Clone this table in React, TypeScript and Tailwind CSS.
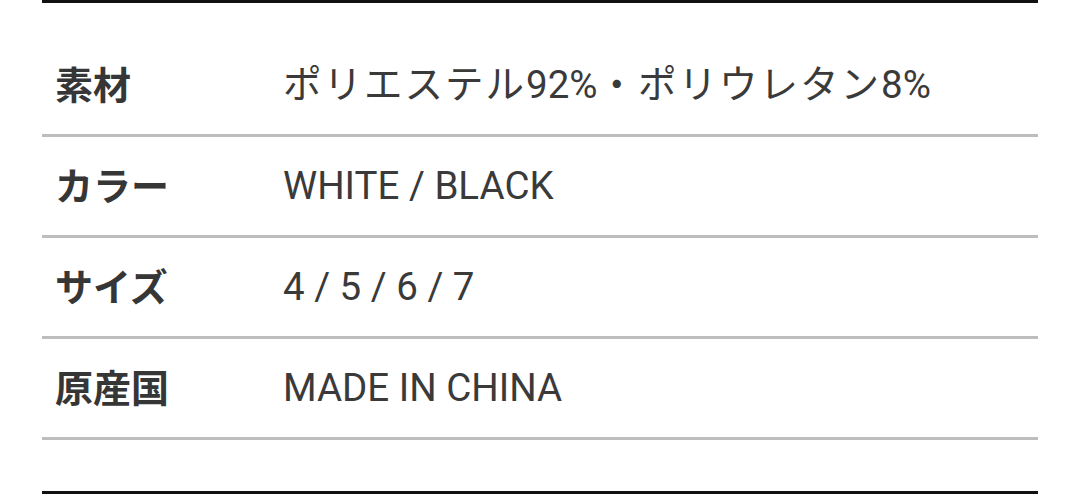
import React from "react";

const J = ({ children }: { children: React.ReactNode }) => (
  <span className="tracking-[2px]">{children}</span>
);

const rows: [string, React.ReactNode][] = [
  [
    "素材",
    <>
      <J>ポリエステル</J>92%<J>・ポリウレタン</J>8%
    </>,
  ],
  ["カラー", "WHITE / BLACK"],
  ["サイズ", "4 / 5 / 6 / 7"],
  ["原産国", "MADE IN CHINA"],
];

export default function App() {
  return (
    <div className="w-[1080px] h-[499px] bg-white overflow-hidden">
      <div className="ml-[42px] w-[996px] border-t-[3px] border-b-[3px] border-[#111] pt-[33px] pb-[51px]">
        {rows.map(([k, v], i) => (
          <div
            key={i}
            className="h-[101px] flex items-center border-b-[3px] border-[#bdbdbd]"
          >
            <div
              className="w-[241px] pl-[13px] text-[38px] font-bold text-[#363636] leading-none -mt-[4px]"
              style={{ fontFamily: '"Noto Sans CJK JP", sans-serif' }}
            >
              {k}
            </div>
            <div
              className="text-[38.5px] text-[#3a3a3a] leading-none"
              style={{ fontFamily: 'Roboto, "Noto Sans CJK JP", sans-serif' }}
            >
              {v}
            </div>
          </div>
        ))}
      </div>
    </div>
  );
}
